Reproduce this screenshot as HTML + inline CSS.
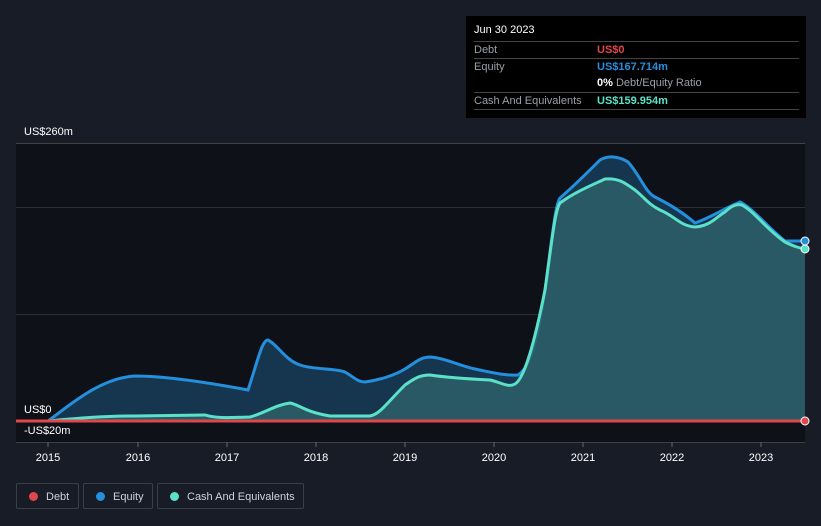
<!DOCTYPE html>
<html><head><style>
body{margin:0;width:821px;height:526px;background:#181c27;font-family:"Liberation Sans",sans-serif;overflow:hidden;position:relative}
.tt{position:absolute;left:466px;top:16px;width:340px;height:102px;background:#000;color:#fff;font-size:11px}
.tt .r{position:absolute;left:8px;width:325px;border-top:1px solid #444;height:16px;line-height:16px;color:#9aa0a6}
.tt .r span{font-weight:bold}
.lbl{position:absolute;color:#fff;font-size:11px}
.leg{position:absolute;top:483px;height:26px;border:1px solid #3a3f4a;border-radius:2px;color:#cfd2d6;font-size:11px;line-height:26px;box-sizing:border-box}
.leg i{display:inline-block;width:9px;height:9px;border-radius:50%;margin:0 8px 0 12px;vertical-align:-1px}
</style></head><body>
<svg width="821" height="526" style="position:absolute;left:0;top:0">
<rect x="16" y="143" width="789" height="299" fill="#0e1118"/>
<line x1="16" y1="143.5" x2="805" y2="143.5" stroke="#444" />
<line x1="16" y1="207.5" x2="805" y2="207.5" stroke="#2a2e36"/>
<line x1="16" y1="314.5" x2="805" y2="314.5" stroke="#2a2e36"/>
<line x1="16" y1="442.5" x2="805" y2="442.5" stroke="#3a3f4a"/>
<path d="M48,421 C70,405 100,378 135,376 C160,376 200,381 248,390 C258,360 262,340 268,340 C278,345 285,360 300,365 C315,370 335,368 345,372 C355,378 358,382 365,382 C380,380 395,375 405,369 C415,363 420,357 430,357 C445,358 460,366 475,369 C490,372 505,376 518,375 C530,368 538,340 545,290 C552,240 555,205 560,198 C575,185 585,175 600,160 C610,154 622,158 628,162 C640,175 645,192 655,197 C665,202 680,210 695,223 C710,218 725,208 740,202 C755,210 765,225 785,241 L805,241 L805,421 Z" fill="#163650"/>
<path d="M48,421 C70,405 100,378 135,376 C160,376 200,381 248,390 C258,360 262,340 268,340 C278,345 285,360 300,365 C315,370 335,368 345,372 C355,378 358,382 365,382 C380,380 395,375 405,369 C415,363 420,357 430,357 C445,358 460,366 475,369 C490,372 505,376 518,375 C530,368 538,340 545,290 C552,240 555,205 560,198 C575,185 585,175 600,160 C610,154 622,158 628,162 C640,175 645,192 655,197 C665,202 680,210 695,223 C710,218 725,208 740,202 C755,210 765,225 785,241 L805,241" fill="none" stroke="#2490dd" stroke-width="3"/>
<path d="M48,421 C70,419 100,416 135,416 L205,415 C215,418 225,418 250,417 C265,413 275,405 290,403 C300,405 305,412 330,416 L370,416 C380,414 385,405 405,385 C415,378 420,375 430,375 C450,378 470,379 490,380 C500,382 508,388 515,384 C525,378 535,340 545,290 C552,240 555,210 560,203 C575,192 590,186 605,179 C618,178 624,182 635,190 C645,198 648,204 660,210 C675,216 680,226 695,227 C710,226 715,218 725,212 C732,205 738,204 742,205 C755,212 765,228 785,242 C795,247 800,248 805,249 L805,421 Z" fill="#2c5f68" fill-opacity="0.85"/>
<path d="M48,421 C70,419 100,416 135,416 L205,415 C215,418 225,418 250,417 C265,413 275,405 290,403 C300,405 305,412 330,416 L370,416 C380,414 385,405 405,385 C415,378 420,375 430,375 C450,378 470,379 490,380 C500,382 508,388 515,384 C525,378 535,340 545,290 C552,240 555,210 560,203 C575,192 590,186 605,179 C618,178 624,182 635,190 C645,198 648,204 660,210 C675,216 680,226 695,227 C710,226 715,218 725,212 C732,205 738,204 742,205 C755,212 765,228 785,242 C795,247 800,248 805,249" fill="none" stroke="#5ce1c9" stroke-width="3"/>
<line x1="16" y1="421" x2="805" y2="421" stroke="#e0474c" stroke-width="3"/>
<circle cx="805" cy="241" r="4" fill="#2490dd" stroke="#fff"/>
<circle cx="805" cy="249" r="4" fill="#5ce1c9" stroke="#fff"/>
<circle cx="805" cy="421" r="4" fill="#e0474c" stroke="#fff"/>
<g stroke="#666">
<line x1="48" y1="442" x2="48" y2="447"/><line x1="138" y1="442" x2="138" y2="447"/><line x1="227" y1="442" x2="227" y2="447"/><line x1="316" y1="442" x2="316" y2="447"/><line x1="405" y1="442" x2="405" y2="447"/><line x1="494" y1="442" x2="494" y2="447"/><line x1="583" y1="442" x2="583" y2="447"/><line x1="672" y1="442" x2="672" y2="447"/><line x1="761" y1="442" x2="761" y2="447"/>
</g>
<g fill="#fff" font-size="11" text-anchor="middle" font-family="Liberation Sans">
<text x="48" y="461">2015</text><text x="138" y="461">2016</text><text x="227" y="461">2017</text><text x="316" y="461">2018</text><text x="405" y="461">2019</text><text x="494" y="461">2020</text><text x="583" y="461">2021</text><text x="672" y="461">2022</text><text x="761" y="461">2023</text>
</g>
</svg>
<div class="lbl" style="left:24px;top:126px">US$260m</div>
<div class="lbl" style="left:24px;top:404px">US$0</div>
<div class="lbl" style="left:24px;top:425px">-US$20m</div>
<div class="tt">
<div style="position:absolute;left:8px;top:8px">Jun 30 2023</div>
<div class="r" style="top:25px">Debt<span style="position:absolute;left:123px;color:#e0474c">US$0</span></div>
<div class="r" style="top:42px">Equity<span style="position:absolute;left:123px;color:#2490dd">US$167.714m</span></div>
<div class="r" style="top:59px;border:none"><span style="position:absolute;left:123px;font-weight:normal"><b style="color:#fff">0%</b> Debt/Equity Ratio</span></div>
<div class="r" style="top:76px">Cash And Equivalents<span style="position:absolute;left:123px;color:#5ce1c9">US$159.954m</span></div>
<div class="r" style="top:93px;height:0"></div>
</div>
<div class="leg" style="left:16px;width:63px"><i style="background:#e0474c"></i>Debt</div>
<div class="leg" style="left:83px;width:70px"><i style="background:#2490dd"></i>Equity</div>
<div class="leg" style="left:157px;width:147px"><i style="background:#5ce1c9"></i>Cash And Equivalents</div>
</body></html>
